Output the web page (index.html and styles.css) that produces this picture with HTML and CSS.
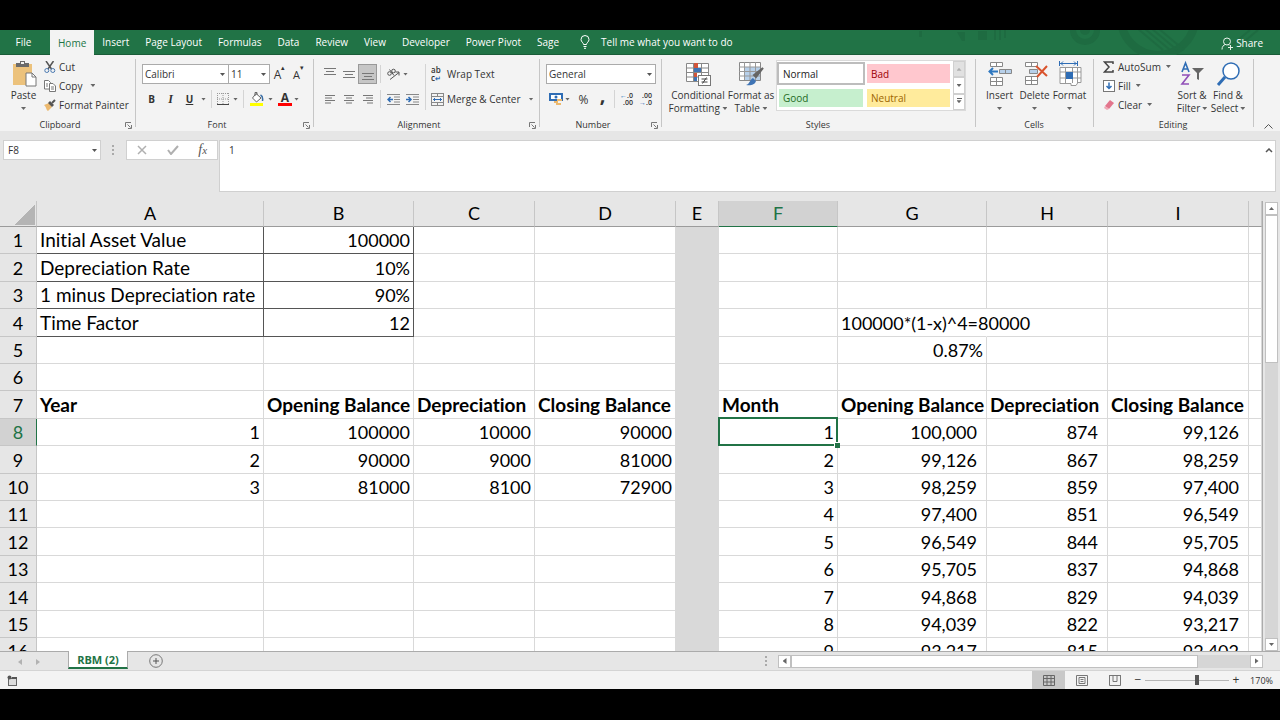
FILE: index.html
```
<!DOCTYPE html>
<html lang="en">
<head>
    <meta charset="utf-8">
    <title>RBM (2)</title>
    <link rel="stylesheet" href="styles.css">
</head>
<body>
    <div class="app">
        <nav class="tabs">
            <svg class="deco" width="360" height="25" viewBox="0 0 360 25">
                <g fill="#1e6b41">
                    <rect x="17" y="1" width="3" height="6"/>
                    <path d="M55 2l8 0 0 9-3 0z"/>
                    <rect x="76" y="1" width="9" height="9"/>
                    <path d="M92 0h2v10h-2zM97 0h2v10h-2zM102 0h2v8h-2z"/>
                </g>
                <g fill="none" stroke="#1e6b41">
                    <circle cx="183" cy="0" r="12" stroke-width="6"/>
                    <circle cx="256" cy="-12" r="37" stroke-width="8"/>
                    <path d="M235-2l26 22M242-2l26 22M249-2l26 22M256-2l26 22M330 15l18-15M338 15l18-15" stroke-width="2"/>
                </g>
                <circle cx="183" cy="0" r="5" fill="#1e6b41"/>
            </svg>
            <button class="tab file">File</button>
            <button class="tab active">Home</button>
            <button class="tab">Insert</button>
            <button class="tab">Page Layout</button>
            <button class="tab">Formulas</button>
            <button class="tab">Data</button>
            <button class="tab">Review</button>
            <button class="tab">View</button>
            <button class="tab">Developer</button>
            <button class="tab">Power Pivot</button>
            <button class="tab">Sage</button>
            <button class="tab tell">
                <svg width="10" height="14" viewBox="0 0 10 14" fill="none" stroke="#fff"><path d="M3.5 9.500C3.500 7.500 1 7 1 4.500a4 4 0 0 1 8 0C9 7 6.500 7.500 6.500 9.500zM3.500 11.500h3M4 13.300h2"/></svg>
                Tell me what you want to do
            </button>
            <button class="tab share">
                <svg width="12" height="13" viewBox="0 0 12 13" fill="none" stroke="#e6f2ea"><circle cx="6" cy="4.500" r="3.500"/><path d="M1 12.500c0-3 1.500-4.500 3.500-5M7 7.500l1 1M9.500 8v5M7 10.500h5"/></svg>
                Share
            </button>
        </nav>

        <div class="ribbon">
            <section class="group clipboard">
                <div class="tools">
                    <button class="big">
                        <svg width="26" height="27" viewBox="0 0 26 27">
                            <rect x="2" y="4" width="19" height="21" fill="#ecc27c"/>
                            <path d="M5 3h4V1h5v2h4v4H5z" fill="#6b6b6b"/><rect x="10" y="2" width="3" height="2" fill="#f3f3f3"/>
                            <path d="M15 13h6l4 4v9H15z" fill="#fff" stroke="#777"/><path d="M21 13v4h4" fill="none" stroke="#777"/>
                        </svg>
                        <span>Paste</span>
                        <i class="caret"></i>
                    </button>
                    <div class="stack">
                        <button class="item">
                            <svg width="12" height="12" viewBox="0 0 12 12" fill="none"><path d="M2 0l5.500 8M9.500 0L4 8" stroke="#555" stroke-width="1.500"/><circle cx="2.800" cy="9.500" r="2" stroke="#4a78b0"/><circle cx="8.800" cy="9.500" r="2" stroke="#4a78b0"/></svg>
                            Cut
                        </button>
                        <button class="item">
                            <svg width="12" height="12" viewBox="0 0 12 12" fill="#fff" stroke="#777"><path d="M.5.500h4l2 2V9h-6z"/><path d="M5.500 3.500h3.500l2.500 2.500v5.500h-6zM7 7h3M7 9h3M2 4h2M2 6h2"/></svg>
                            Copy <i class="caret"></i>
                        </button>
                        <button class="item">
                            <svg width="12" height="12" viewBox="0 0 12 12"><path d="M0 6l5-2 3 4-4 4C2 11 3 9 0 6z" fill="#ecb96f"/><path d="M4 4l2-2 4 4-2 2z" fill="#555"/><path d="M8 4l3-3" stroke="#555" stroke-width="2"/></svg>
                            Format Painter
                        </button>
                    </div>
                </div>
                <footer>Clipboard<button class="launch" aria-label="Clipboard options"><svg width="7" height="7" viewBox="0 0 7 7" fill="none" stroke="#777"><path d="M.5 5V.500H6M2.500 2.500l3 3M6.500 3v3.500H3"/></svg></button></footer>
            </section>

            <section class="group font">
                <div class="rows">
                    <div class="line">
                        <span class="combo name"><select aria-label="Font"><option>Calibri</option></select></span><span class="combo size"><select aria-label="Font size"><option>11</option></select></span>
                        <button class="tool grow">A<sup>▴</sup></button>
                        <button class="tool grow shrink">A<sup>▾</sup></button>
                    </div>
                    <div class="line">
                        <button class="tool"><b>B</b></button>
                        <button class="tool serif"><b><em>I</em></b></button>
                        <button class="tool"><b><u>U</u></b></button>
                        <i class="caret"></i>
                        <i class="sep"></i>
                        <button class="tool slim"><svg width="12" height="12" viewBox="0 0 12 12" fill="none"><path d="M.5 0v12M6 0v12M11.500 0v12M0 .5h12M0 6h12" stroke="#999" stroke-dasharray="1 1"/><path d="M0 11.500h12" stroke="#444"/></svg></button>
                        <i class="caret"></i>
                        <i class="sep"></i>
                        <button class="tool"><svg width="14" height="14" viewBox="0 0 14 14"><path d="M6 1.500l5 4.500-4.500 4L2.500 6z" fill="#fff" stroke="#666"/><path d="M5 4V.500h2V3" fill="none" stroke="#666"/><path d="M10.500 3c2 1 2.500 3 2 6" fill="none" stroke="#3a6ea5" stroke-width="1.500"/><rect y="11" width="13" height="3" fill="#ff0"/></svg></button>
                        <i class="caret"></i>
                        <button class="tool swatch">A</button>
                        <i class="caret"></i>
                    </div>
                </div>
                <footer>Font<button class="launch" aria-label="Font options"><svg width="7" height="7" viewBox="0 0 7 7" fill="none" stroke="#777"><path d="M.5 5V.500H6M2.500 2.500l3 3M6.500 3v3.500H3"/></svg></button></footer>
            </section>

            <section class="group align">
                <div class="tools">
                    <div class="rows">
                        <div class="line">
                            <button class="tool"><svg width="12" height="12" viewBox="0 0 12 12" stroke="#777"><path d="M0 .5h12M2 3.500h8M0 6.500h12"/></svg></button>
                            <button class="tool"><svg width="12" height="12" viewBox="0 0 12 12" stroke="#777"><path d="M0 3.500h12M2 6.500h8M0 9.500h12"/></svg></button>
                            <button class="tool on"><svg width="12" height="12" viewBox="0 0 12 12" stroke="#777"><path d="M0 5.500h12M2 8.500h8M0 11.500h12"/></svg></button>
                            <i class="sep"></i>
                            <button class="tool"><svg width="13" height="12" viewBox="0 0 13 12" fill="none" stroke="#555"><path d="M3 11.500l9-7M8.500 4H12v3.500"/><circle cx="2.500" cy="5.500" r="1.800"/><path d="M2.500 1.500l4.500 6"/><circle cx="6.500" cy="3" r="1.800"/></svg></button>
                            <i class="caret"></i>
                        </div>
                        <div class="line">
                            <button class="tool"><svg width="10" height="9" viewBox="0 0 10 9" stroke="#777"><path d="M0 .5h10M0 3h7M0 5.500h10M0 8h6"/></svg></button>
                            <button class="tool"><svg width="10" height="9" viewBox="0 0 10 9" stroke="#777"><path d="M0 .5h10M2 3h6M0 5.500h10M2 8h6"/></svg></button>
                            <button class="tool"><svg width="10" height="9" viewBox="0 0 10 9" stroke="#777"><path d="M0 .5h10M3 3h7M0 5.500h10M4 8h6"/></svg></button>
                            <i class="sep"></i>
                            <button class="tool"><svg width="13" height="11" viewBox="0 0 13 11" fill="none" stroke="#888"><path d="M0 .5h13M7 3h6M7 5.500h6M7 8h6M0 10.500h13"/><path d="M6 5.500H1M3.500 3L1 5.500 3.500 8" stroke="#2f6db5" stroke-width="1.500"/></svg></button>
                            <button class="tool"><svg width="13" height="11" viewBox="0 0 13 11" fill="none" stroke="#888"><path d="M0 .5h13M7 3h6M7 5.500h6M7 8h6M0 10.500h13"/><path d="M0 5.500h5M2.500 3L5 5.500 2.500 8" stroke="#2f6db5" stroke-width="1.500"/></svg></button>
                        </div>
                    </div>
                    <i class="sep tall"></i>
                    <div class="rows">
                        <div class="line">
                            <button class="item"><span class="abc">ab<br>c<b>↵</b></span>Wrap Text</button>
                        </div>
                        <div class="line">
                            <button class="item"><svg width="13" height="13" viewBox="0 0 13 13" fill="none" stroke="#888"><rect x=".5" y=".5" width="12" height="12"/><path d="M0 3.500h13M0 9.500h13M6.500 0v3M6.500 10v3"/><path d="M2 6.500h9M4 5L2.500 6.500 4 8M9 5l1.500 1.500L9 8" stroke="#2f6db5"/></svg>Merge &amp; Center <i class="caret"></i></button>
                        </div>
                    </div>
                </div>
                <footer>Alignment<button class="launch" aria-label="Alignment options"><svg width="7" height="7" viewBox="0 0 7 7" fill="none" stroke="#777"><path d="M.5 5V.500H6M2.500 2.500l3 3M6.500 3v3.500H3"/></svg></button></footer>
            </section>

            <section class="group number">
                <div class="rows">
                    <div class="line">
                        <span class="combo format"><select aria-label="Number format"><option>General</option></select></span>
                    </div>
                    <div class="line">
                        <button class="tool"><svg width="14" height="12" viewBox="0 0 14 12"><rect x="1" y="1" width="12" height="6" fill="#fff" stroke="#2f6db5" stroke-width="2"/><circle cx="7" cy="4" r="1.500" fill="#2f6db5"/><path d="M8 6h5v2H8zM5 8h4v2H5zM7 10h5v2H7z" fill="#ecb96f"/></svg></button>
                        <i class="caret"></i>
                        <button class="tool pct">%</button>
                        <button class="tool comma">,</button>
                        <i class="sep"></i>
                        <button class="tool dec"><span><b>←</b>.0<br>.00</span></button>
                        <button class="tool dec"><span>.00<br><b>→</b>.0</span></button>
                    </div>
                </div>
                <footer>Number<button class="launch" aria-label="Number options"><svg width="7" height="7" viewBox="0 0 7 7" fill="none" stroke="#777"><path d="M.5 5V.500H6M2.500 2.500l3 3M6.500 3v3.500H3"/></svg></button></footer>
            </section>

            <section class="group styles">
                <div class="tools">
                    <button class="big wide">
                        <svg width="26" height="27" viewBox="0 0 26 27">
                            <path d="M1.500 3.500h22v18h-22zM1.500 8h22M1.500 12.500h22M1.500 17h22M8.500 3v18M16.500 3v18" fill="#fff" stroke="#888"/>
                            <path d="M9 3h4v5H9zM9 13h3v4H9z" fill="#d2553a"/><path d="M9 8h7v4H9zM9 17h3v4H9z" fill="#3f74b5"/>
                            <rect x="13.500" y="15.500" width="12" height="10" fill="#fff" stroke="#777"/><path d="M16.500 19h6M16.500 22h6M21.500 17.500l-4 6" stroke="#444"/>
                        </svg>
                        <span>Conditional<br>Formatting <i class="caret"></i></span>
                    </button>
                    <button class="big fat">
                        <svg width="26" height="27" viewBox="0 0 26 27">
                            <path d="M1.500 2.500h21v18h-21z" fill="#fff" stroke="#888"/><path d="M7 7h15v13H7z" fill="#b7d0ea"/>
                            <path d="M1 7h21M1 11.500h21M1 16h21M6.500 2v18M12 2v18M17.500 2v18" stroke="#999"/>
                            <path d="M25 8l-7 9-2-2z" fill="#666" stroke="#666" stroke-width="2"/><path d="M8 25c4-1 4-6 7-7l3 3c-1 4-6 5-10 4z" fill="#3f74b5"/>
                        </svg>
                        <span>Format as<br>Table <i class="caret"></i></span>
                    </button>
                    <div class="gallery">
                        <button class="style normal">Normal</button>
                        <button class="style bad">Bad</button>
                        <button class="style good">Good</button>
                        <button class="style neutral">Neutral</button>
                        <div class="spin">
                            <button class="off" aria-label="Up"><i class="caret up"></i></button>
                            <button aria-label="Down"><i class="caret"></i></button>
                            <button class="more" aria-label="More"><i class="caret"></i></button>
                        </div>
                    </div>
                </div>
                <footer>Styles</footer>
            </section>

            <section class="group cells">
                <div class="tools">
                    <button class="big">
                        <svg width="26" height="27" viewBox="0 0 26 27" fill="#fff" stroke="#888">
                            <path d="M3.500 2.500h12v4h-12zM9.500 2.500v4M3.500 17.500h12v8h-12zM9.500 17v8M3.500 21.500h12"/><path d="M12.500 9.500h12v4h-12zM18.500 9v5" fill="#b7d0ea"/>
                            <path d="M11 11.500H2M6 8l-3.500 3.500L6 15" fill="none" stroke="#2f78c0" stroke-width="2"/>
                        </svg>
                        <span>Insert</span>
                        <i class="caret"></i>
                    </button>
                    <button class="big">
                        <svg width="26" height="27" viewBox="0 0 26 27" fill="#fff" stroke="#888">
                            <path d="M3.500 2.500h12v4h-12zM9.500 2.500v4M3.500 16.500h12v8h-12zM9.500 16v8M3.500 20.500h12"/><path d="M7.500 9.500h8v4h-8z" fill="#b7d0ea"/>
                            <path d="M14 6l11 10M25 6L15 17" fill="none" stroke="#d9532c" stroke-width="2"/>
                        </svg>
                        <span>Delete</span>
                        <i class="caret"></i>
                    </button>
                    <button class="big">
                        <svg width="26" height="27" viewBox="0 0 26 27" fill="#fff" stroke="#999">
                            <path d="M3 7.500h21v15h-3l-2 3h-5v-2H3zM3 12h21M3 18h21M8.500 7v16M15.500 7v16M20.500 7v16"/><path d="M9 12h7v7H9z" fill="#2f6db5" stroke="none"/>
                            <path d="M2.500 1v5M20.500 1v5M3 3.500h17M6 1.500l-2 2 2 2M17 1.500l2 2-2 2" fill="none" stroke="#2f6db5"/>
                        </svg>
                        <span>Format</span>
                        <i class="caret"></i>
                    </button>
                </div>
                <footer>Cells</footer>
            </section>

            <section class="group editing">
                <div class="tools">
                    <div class="stack">
                        <button class="item">
                            <svg width="12" height="12" viewBox="0 0 12 12" fill="none" stroke="#444" stroke-width="1.500"><path d="M10 3V1H1.500L6 6l-4.500 5H10V9"/></svg>
                            AutoSum <i class="caret"></i>
                        </button>
                        <button class="item">
                            <svg width="12" height="12" viewBox="0 0 12 12" fill="#fff" stroke="#777"><rect x=".5" y=".5" width="11" height="11"/><path d="M6 2.500v6M3.500 6L6 8.500 8.500 6" fill="none" stroke="#2f6db5" stroke-width="1.500"/></svg>
                            Fill <i class="caret"></i>
                        </button>
                        <button class="item">
                            <svg width="12" height="12" viewBox="0 0 12 12"><path d="M7 1l4 3-5 6-4-3z" fill="#e2758c"/><path d="M2 7l4 3-2 1-3-2z" fill="#f0a8b5"/></svg>
                            Clear <i class="caret"></i>
                        </button>
                    </div>
                    <button class="big">
                        <svg width="26" height="27" viewBox="0 0 26 27" fill="none">
                            <path d="M3 12L6.500 3 10 12M4 9h5" stroke="#2f6db5" stroke-width="1.600"/><path d="M3 15h7l-7 9h7" stroke="#9150b8" stroke-width="1.600"/>
                            <path d="M13 8h12l-5 5v7l-2-1v-6z" fill="#666"/>
                        </svg>
                        <span>Sort &amp;<br>Filter<i class="caret"></i></span>
                    </button>
                    <button class="big">
                        <svg width="26" height="27" viewBox="0 0 26 27" fill="none" stroke="#2f6db5"><circle cx="16" cy="11" r="8" fill="#fff" stroke-width="1.500"/><path d="M10 17l-7 8" stroke-width="3"/></svg>
                        <span>Find &amp;<br>Select<i class="caret"></i></span>
                    </button>
                </div>
                <footer>Editing</footer>
            </section>
            <button class="collapse" aria-label="Collapse the ribbon"><svg width="9" height="5" viewBox="0 0 9 5" fill="none" stroke="#555"><path d="M.5 4.500l4-4 4 4"/></svg></button>
        </div>

        <div class="formula">
            <span class="combo cellref"><input type="text" value="F8" aria-label="Name box"></span>
            <i class="dots"></i>
            <div class="entry">
                <button aria-label="Cancel"><svg width="10" height="10" viewBox="0 0 10 10" stroke="#b0b0b0" stroke-width="1.500"><path d="M1 1l8 8M9 1L1 9"/></svg></button>
                <button aria-label="Enter"><svg width="12" height="10" viewBox="0 0 12 10" fill="none" stroke="#b0b0b0" stroke-width="2"><path d="M1 5l3 4 7-8"/></svg></button>
                <button class="fx" aria-label="Insert function"><em>f<small>x</small></em></button>
            </div>
            <div class="bar">
                <textarea aria-label="Formula bar">1</textarea>
                <button aria-label="Collapse formula bar"><svg width="8" height="5" viewBox="0 0 8 5" fill="none" stroke="#555" stroke-width="1.500"><path d="M1 4l3-3 3 3"/></svg></button>
            </div>
        </div>

        <main class="sheet">
            <div class="grid">
                <table>
                    <colgroup>
                        <col class="c-num"><col class="c-a"><col class="c-b"><col class="c-c"><col class="c-d"><col class="c-e"><col class="c-f"><col class="c-g"><col class="c-c"><col class="c-d"><col>
                    </colgroup>
                    <thead>
                        <tr><th class="corner"></th><th>A</th><th>B</th><th>C</th><th>D</th><th>E</th><th class="sel">F</th><th>G</th><th>H</th><th>I</th><th></th></tr>
                    </thead>
                    <tbody>
                        <tr><th>1</th><td class="box txt">Initial Asset Value</td><td class="box">100000</td><td></td><td></td><td class="fill"></td><td></td><td></td><td></td><td></td><td></td></tr>
                        <tr><th>2</th><td class="box txt">Depreciation Rate</td><td class="box">10%</td><td></td><td></td><td class="fill"></td><td></td><td></td><td></td><td></td><td></td></tr>
                        <tr><th>3</th><td class="box txt">1 minus Depreciation rate</td><td class="box">90%</td><td></td><td></td><td class="fill"></td><td></td><td></td><td></td><td></td><td></td></tr>
                        <tr><th>4</th><td class="box txt">Time Factor</td><td class="box">12</td><td></td><td></td><td class="fill"></td><td></td><td class="spill">100000*(1-x)^4=80000</td><td></td><td></td><td></td></tr>
                        <tr><th>5</th><td></td><td></td><td></td><td></td><td class="fill"></td><td></td><td>0.87%</td><td></td><td></td><td></td></tr>
                        <tr><th>6</th><td></td><td></td><td></td><td></td><td class="fill"></td><td></td><td></td><td></td><td></td><td></td></tr>
                        <tr class="head"><th>7</th><td>Year</td><td>Opening Balance</td><td>Depreciation</td><td>Closing Balance</td><td class="fill"></td><td>Month</td><td>Opening Balance</td><td>Depreciation</td><td>Closing Balance</td><td></td></tr>
                        <tr><th class="sel">8</th><td>1</td><td>100000</td><td>10000</td><td>90000</td><td class="fill"></td><td class="cursor">1</td><td class="acc">100,000</td><td class="acc">874</td><td class="acc">99,126</td><td></td></tr>
                        <tr><th>9</th><td>2</td><td>90000</td><td>9000</td><td>81000</td><td class="fill"></td><td>2</td><td class="acc">99,126</td><td class="acc">867</td><td class="acc">98,259</td><td></td></tr>
                        <tr><th>10</th><td>3</td><td>81000</td><td>8100</td><td>72900</td><td class="fill"></td><td>3</td><td class="acc">98,259</td><td class="acc">859</td><td class="acc">97,400</td><td></td></tr>
                        <tr><th>11</th><td></td><td></td><td></td><td></td><td class="fill"></td><td>4</td><td class="acc">97,400</td><td class="acc">851</td><td class="acc">96,549</td><td></td></tr>
                        <tr><th>12</th><td></td><td></td><td></td><td></td><td class="fill"></td><td>5</td><td class="acc">96,549</td><td class="acc">844</td><td class="acc">95,705</td><td></td></tr>
                        <tr><th>13</th><td></td><td></td><td></td><td></td><td class="fill"></td><td>6</td><td class="acc">95,705</td><td class="acc">837</td><td class="acc">94,868</td><td></td></tr>
                        <tr><th>14</th><td></td><td></td><td></td><td></td><td class="fill"></td><td>7</td><td class="acc">94,868</td><td class="acc">829</td><td class="acc">94,039</td><td></td></tr>
                        <tr><th>15</th><td></td><td></td><td></td><td></td><td class="fill"></td><td>8</td><td class="acc">94,039</td><td class="acc">822</td><td class="acc">93,217</td><td></td></tr>
                        <tr><th>16</th><td></td><td></td><td></td><td></td><td class="fill"></td><td>9</td><td class="acc">93,217</td><td class="acc">815</td><td class="acc">92,402</td><td></td></tr>
                    </tbody>
                </table>
            </div>
            <div class="vscroll">
                <button aria-label="Scroll up"><i class="caret up"></i></button>
                <div class="thumb"></div>
                <button class="end" aria-label="Scroll down"><i class="caret"></i></button>
            </div>
        </main>

        <div class="sheets">
            <button class="step" aria-label="Previous sheet"><i class="caret left"></i></button>
            <button class="step" aria-label="Next sheet"><i class="caret right"></i></button>
            <button class="sheet-tab">RBM (2)</button>
            <button class="add" aria-label="New sheet"><svg width="14" height="14" viewBox="0 0 14 14" fill="none" stroke="#777"><circle cx="7" cy="7" r="6.300"/><path d="M7 4v6M4 7h6" stroke="#555"/></svg></button>
            <i class="dots"></i>
            <div class="hscroll">
                <button aria-label="Scroll left"><i class="caret left"></i></button>
                <div class="thumb"></div>
                <button class="end" aria-label="Scroll right"><i class="caret right"></i></button>
            </div>
        </div>

        <div class="status">
            <button class="macro" aria-label="Record macro"><svg width="11" height="11" viewBox="0 0 11 11"><rect x="1.500" y="3.500" width="8" height="7" fill="#ddd" stroke="#666"/><path d="M5 2h5v2H5z" fill="#555"/><circle cx="2.500" cy="2.500" r="2" fill="#555"/></svg></button>
            <button class="view on" aria-label="Normal"><svg width="12" height="11" viewBox="0 0 12 11" fill="none" stroke="#666"><path d="M.5.500h11v10H.5zM0 3.500h12M0 7h12M4 0v11M8 0v11"/></svg></button>
            <button class="view" aria-label="Page layout"><svg width="12" height="11" viewBox="0 0 12 11" fill="none" stroke="#777"><path d="M.5.500h11v10H.5zM3 2.500h6v6H3zM4.500 4.500h3M4.500 6.500h3"/></svg></button>
            <button class="view" aria-label="Page break preview"><svg width="12" height="11" viewBox="0 0 12 11" fill="none" stroke="#777"><path d="M.5 0v10.500h11V0M0 .5h12M4 0v6.500h4V0"/></svg></button>
            <button class="zoom" aria-label="Zoom out">−</button>
            <input type="range" min="0" max="100" value="62" aria-label="Zoom">
            <button class="zoom" aria-label="Zoom in">+</button>
            <span class="level">170%</span>
        </div>
    </div>
</body>
</html>
```

FILE: styles.css
```
* {
    box-sizing: border-box;
}

body {
    margin: 0;
    padding: 30px 0 31px;
    height: 100vh;
    background: #000;
    font-family: "Open Sans", "Noto Sans", sans-serif;
    font-size: 10px;
    color: #333;
    overflow: hidden;
}

button,
input,
select,
textarea {
    font: inherit;
    color: inherit;
    border: 0;
    margin: 0;
    padding: 0;
    background: none;
    border-radius: 0;
    outline: 0;
    appearance: none;
}

svg {
    display: block;
    flex: none;
}

.app {
    display: flex;
    flex-direction: column;
    height: 100%;
    background: #e6e6e6;
}

.caret {
    display: inline-block;
    flex: none;
    width: 5px;
    height: 3px;
    background: #666;
    clip-path: polygon(0 0, 100% 0, 50% 100%);
}

.caret.up {
    clip-path: polygon(0 100%, 100% 100%, 50% 0);
}

.caret.left {
    width: 4px;
    height: 6px;
    clip-path: polygon(100% 0, 100% 100%, 0 50%);
}

.caret.right {
    width: 4px;
    height: 6px;
    clip-path: polygon(0 0, 0 100%, 100% 50%);
}

/* ribbon tabs */
.tabs {
    position: relative;
    display: flex;
    flex: none;
    height: 25px;
    background: #217346;
    border-bottom: 1px solid #1a5c38;
}

.deco {
    position: absolute;
    right: 18px;
    top: 0;
}

.tab {
    position: relative;
    padding: 0 8px;
    color: #fff;
    white-space: nowrap;
}

.tab.file {
    width: 50px;
    padding: 0 3px 0 0;
}

.tab.active {
    background: #f3f3f3;
    color: #217346;
    height: 25px;
}

.tab.tell,
.tab.share {
    display: flex;
    align-items: center;
    gap: 11px;
    margin-left: 5px;
}

.tab.share {
    gap: 3px;
    margin: 2px 9px 0 auto;
}

/* ribbon */
.ribbon {
    display: flex;
    flex: none;
    height: 76px;
    background: #f3f3f3;
    position: relative;
}

.group {
    position: relative;
    display: flex;
    flex-direction: column;
    justify-content: space-between;
    flex: none;
    padding: 2px 6px 0;
}

.group::after {
    content: "";
    position: absolute;
    right: 0;
    top: 4px;
    bottom: 4px;
    width: 1px;
    background: #c6c6c6;
}

.clipboard { width: 136px; }
.font { width: 178px; }
.align { width: 226px; }
.number { width: 122px; }
.styles { width: 314px; }
.cells { width: 118px; }
.editing { width: 160px; }

.group footer {
    position: relative;
    padding-right: 16px;
    text-align: center;
    font-size: 9px;
    line-height: 12px;
}

.styles footer,
.cells footer,
.editing footer {
    padding-right: 2px;
}

.launch {
    position: absolute;
    right: -2px;
    top: 3px;
}

.tools,
.line {
    display: flex;
}

.rows {
    display: flex;
    flex-direction: column;
    gap: 5px;
    padding-top: 7px;
}

.tools .rows {
    padding-top: 7px;
}

.line {
    align-items: center;
    height: 20px;
}

.big {
    display: flex;
    flex-direction: column;
    align-items: center;
    width: 35px;
    padding-top: 3px;
    line-height: 13px;
    white-space: nowrap;
}

.big > span {
    margin-top: 2px;
}

.big > .caret {
    margin-top: 5px;
}

.big .caret {
    vertical-align: 2px;
}

.stack {
    display: flex;
    flex-direction: column;
    padding-left: 3px;
}

.item {
    display: flex;
    align-items: center;
    gap: 3px;
    height: 19px;
    white-space: nowrap;
}

.item .caret {
    margin-left: 5px;
}

.tool {
    display: flex;
    align-items: center;
    justify-content: center;
    flex: none;
    width: 19px;
    height: 20px;
}

.tool.slim {
    width: 16px;
}

.tool.on {
    background: #c6c6c6;
    border: 1px solid #999;
}

.sep {
    width: 1px;
    height: 18px;
    margin: 0 3px;
    background: #d4d4d4;
}

.sep.tall {
    height: 46px;
    margin: 7px 5px 0 3px;
}

.combo {
    position: relative;
    display: block;
    height: 20px;
    background: #fff;
    border: 1px solid #ababab;
}

.combo::after {
    content: "";
    position: absolute;
    right: 3px;
    top: 8px;
    width: 5px;
    height: 3px;
    background: #555;
    clip-path: polygon(0 0, 100% 0, 50% 100%);
}

.combo select,
.combo input {
    display: block;
    width: 100%;
    height: 18px;
    line-height: 18px;
    padding-left: 2px;
}

.combo.name { width: 87px; }
.combo.size { width: 42px; margin-left: -1px; }
.combo.format { width: 110px; }

.grow {
    font-size: 12px;
}

.grow sup {
    font-size: 7px;
    line-height: 8px;
    align-self: flex-start;
}

.shrink {
    font-size: 11px;
}

.serif {
    font-family: "Liberation Serif", serif;
    font-size: 12px;
}

.font .line .caret {
    margin: 0 2px;
}

.swatch {
    width: 14px;
    height: 14px;
    margin-left: 3px;
    font-size: 12px;
    font-weight: bold;
    line-height: 10px;
    border-bottom: 3px solid #f00;
}

.abc {
    width: 13px;
    font-size: 8px;
    font-weight: 600;
    line-height: 8px;
    text-align: left;
}

.abc b,
.dec b {
    color: #2f6db5;
    font-size: 7px;
}

.pct {
    margin-left: 4px;
    font-size: 12px;
}

.comma {
    font-size: 20px;
    font-weight: bold;
    line-height: 8px;
    padding-bottom: 9px;
}

.number .sep {
    margin: 0 2px;
}

.dec span {
    font-size: 7px;
    font-weight: 600;
    line-height: 7px;
    text-align: right;
}

/* cell styles */
.styles .big.wide {
    width: 60px;
}

.styles .big.fat {
    width: 46px;
}

.gallery {
    display: grid;
    grid-template-columns: 88px 87px 13px;
    grid-template-rows: 25px 24px;
    width: 190px;
    height: 51px;
    margin: 3px 0 0 2px;
    background: #fff;
    border: 1px solid #dadada;
}

.style {
    margin: 3px 2px;
    padding-left: 4px;
    text-align: left;
}

.normal {
    margin: 1px 0;
    border: 2px solid #bdbdbd;
    color: #222;
}

.bad { background: #ffc7ce; color: #9c0006; }
.good { background: #c6efce; color: #1f6b1f; }
.neutral { background: #ffeb9c; color: #9c6500; }

.spin {
    grid-column: 3;
    grid-row: 1 / 3;
    display: flex;
    flex-direction: column;
    margin-left: 1px;
    width: 12px;
}

.spin button {
    display: flex;
    flex: 1;
    align-items: center;
    justify-content: center;
    border: 1px solid #d0d0d0;
}

.spin .off {
    background: #e1e1e1;
}

.off .caret {
    background: #b0b0b0;
}

.more::before {
    content: "";
    position: absolute;
    width: 5px;
    height: 1px;
    margin-bottom: 6px;
    background: #666;
}

.editing .stack {
    width: 74px;
}

.editing .stack .caret {
    margin-left: 2px;
}

.editing .big {
    width: 36px;
}

.editing .big span .caret {
    margin-left: 2px;
}

.collapse {
    position: absolute;
    right: 7px;
    bottom: 2px;
}

/* formula bar */
.formula {
    display: flex;
    flex: none;
    align-items: flex-start;
    height: 70px;
    padding: 9px 4px 0 3px;
}

.combo.cellref {
    width: 98px;
    border-color: #d0d0d0;
}

.combo.cellref input {
    padding-left: 4px;
}

.dots {
    width: 2px;
    height: 10px;
    margin: 5px 12px 0 11px;
    background: repeating-linear-gradient(#aaa 0 2px, transparent 2px 4px);
}

.entry {
    display: flex;
    justify-content: space-around;
    width: 92px;
    height: 20px;
    background: #fff;
    border: 1px solid #d0d0d0;
}

.fx {
    font-family: "Liberation Serif", serif;
    font-size: 14px;
    line-height: 16px;
    color: #555;
}

.fx small {
    font-size: 11px;
}

.bar {
    position: relative;
    flex: 1;
    height: 52px;
    margin-left: 1px;
    border: 1px solid #d0d0d0;
    background: #fff;
}

.bar textarea {
    display: block;
    width: 100%;
    height: 100%;
    padding: 2px 9px;
    resize: none;
}

.bar button {
    position: absolute;
    right: 2px;
    top: 7px;
}

/* worksheet */
.sheet {
    display: flex;
    flex: 1;
    min-height: 0;
    border-bottom: 1px solid #ababab;
}

.grid {
    flex: 1;
    min-width: 0;
    overflow: hidden;
    border-right: 1px solid #ababab;
}

table {
    width: 100%;
    table-layout: fixed;
    border-collapse: separate;
    border-spacing: 0;
    font-family: Lato, "Open Sans", sans-serif;
    font-size: 18px;
    font-variant-ligatures: none;
    line-height: 26px;
    color: #000;
}

.c-num { width: 37px; }
.c-a { width: 227px; }
.c-b { width: 150px; }
.c-c { width: 121px; }
.c-d { width: 141px; }
.c-e { width: 43px; }
.c-f { width: 119px; }
.c-g { width: 149px; }

th {
    padding: 0;
    height: 26px;
    font-weight: normal;
    background: #e6e6e6;
    border-right: 1px solid #c6c6c6;
    border-bottom: 1px solid #c6c6c6;
}

thead th {
    line-height: 25px;
    border-bottom-color: #9b9b9b;
}

.corner {
    background: linear-gradient(135deg, transparent 50%, #b4b4b4 50%) 14px 3px / 21px 21px no-repeat #e6e6e6;
}

th.sel {
    background: #d2d2d2;
    color: #217346;
    border-bottom-color: #217346;
}

tbody th.sel {
    border-right-color: #217346;
    border-bottom-color: #c6c6c6;
}

td {
    position: relative;
    height: 27px;
    padding: 0 3px;
    text-align: right;
    white-space: nowrap;
    background: #fff;
    border-right: 1px solid #d9d9d9;
    border-bottom: 1px solid #d9d9d9;
}

tbody tr:nth-child(5n+2) td,
tbody tr:nth-child(5n+4) td {
    height: 28px;
}

td.fill {
    background: #d9d9d9;
}

td.box {
    border-color: #555;
}

td.txt,
.head td {
    font-size: 19px;
    text-align: left;
}

td.spill {
    z-index: 1;
    text-align: left;
    border-right-color: #fff;
}

td.acc {
    padding-right: 9px;
}

.head td {
    font-weight: bold;
}

td.cursor {
    z-index: 2;
}

.cursor::before {
    content: "";
    position: absolute;
    inset: -2px -1px -1px -1px;
    border: 2px solid #217346;
}

.cursor::after {
    content: "";
    position: absolute;
    right: -3px;
    bottom: -3px;
    width: 5px;
    height: 5px;
    background: #217346;
    border: 1px solid #fff;
    border-width: 1px 0 0 1px;
}

/* scroll bars */
.vscroll {
    display: flex;
    flex-direction: column;
    width: 13px;
    margin: 1px 2px 0 2px;
    background: #d6d6d6;
}

.vscroll button,
.hscroll button {
    display: flex;
    align-items: center;
    justify-content: center;
    flex: none;
    width: 13px;
    height: 13px;
    background: #fff;
    border: 1px solid #c0c0c0;
}

.vscroll .thumb {
    height: 33%;
    background: #fff;
    border: 1px solid #c0c0c0;
}

.vscroll .end {
    margin-top: auto;
}

.sheets {
    display: flex;
    flex: none;
    align-items: center;
    height: 19px;
    padding-right: 17px;
    border-bottom: 1px solid #d4d4d4;
}

.step {
    width: 18px;
    opacity: .4;
}

.step:first-child {
    margin-left: 11px;
}

.sheet-tab {
    align-self: flex-start;
    width: 60px;
    height: 18px;
    margin: -1px 21px 0 21px;
    background: #fff;
    border: 1px solid #ababab;
    border-width: 0 1px 2px;
    border-bottom-color: #217346;
    color: #217346;
    font-size: 11px;
    font-weight: bold;
}

.sheets .dots {
    margin: 0 11px 0 auto;
}

.hscroll {
    display: flex;
    flex: none;
    width: 38.4%;
    background: #d6d6d6;
}

.hscroll .thumb {
    width: 84%;
    background: #fff;
    border: 1px solid #c0c0c0;
}

.hscroll .end {
    margin-left: auto;
}

/* status bar */
.status {
    display: flex;
    flex: none;
    align-items: center;
    height: 18px;
    padding: 0 7px;
    background: #f3f3f3;
}

.macro {
    margin-right: auto;
}

.view {
    display: flex;
    align-items: center;
    justify-content: center;
    width: 33px;
    height: 18px;
}

.view.on {
    background: #c8c8c8;
}

.zoom {
    width: 14px;
    font-size: 12px;
    line-height: 14px;
}

.status input {
    width: 84px;
    height: 12px;
    background: linear-gradient(#b5b5b5, #b5b5b5) center / 100% 1px no-repeat;
}

.status input::-webkit-slider-thumb {
    appearance: none;
    width: 4px;
    height: 10px;
    background: #555;
}

.level {
    width: 30px;
    text-align: right;
    font-size: 9px;
}
```
